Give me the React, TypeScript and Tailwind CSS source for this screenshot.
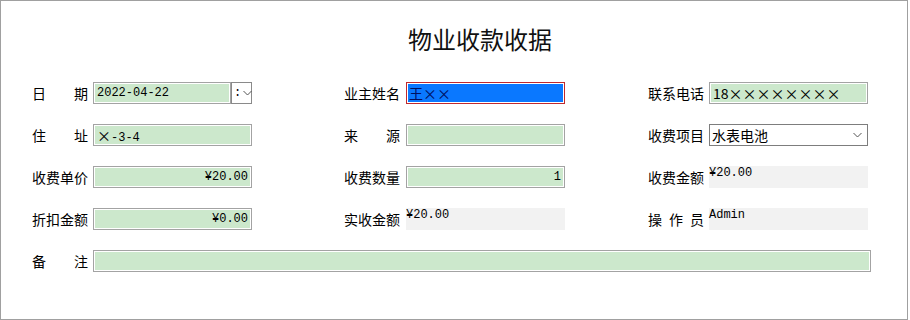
import React from "react";

const cjk = "font-['Noto_Sans_CJK_SC',sans-serif]";
const mono = "font-['Liberation_Mono','Noto_Sans_CJK_SC',monospace]";

function Label({ text }: { text: string }) {
  const chars = text.split("");
  return (
    <div className={`flex w-[56px] shrink-0 justify-between text-[14px] leading-[22px] text-black ${cjk}`}>
      {chars.map((c, i) => (
        <span key={i}>{c}</span>
      ))}
    </div>
  );
}

function GreenBox({
  value = "",
  right = false,
  w = "w-[159px]",
}: {
  value?: React.ReactNode;
  right?: boolean;
  w?: string;
}) {
  return (
    <div
      className={`h-[22px] ${w} border border-[#a3a3a3] bg-[#cce8cc] shadow-[inset_0_0_0_1px_#ffffff] px-[3px] text-[12px] leading-[20px] text-black ${mono} ${right ? "text-right" : ""}`}
    >
      {value}
    </div>
  );
}

function ReadBox({ value }: { value: string }) {
  return (
    <div className={`h-[22px] w-[159px] bg-[#f2f2f2] text-[12px] leading-[14px] text-black ${mono}`}>{value}</div>
  );
}

function Chevron() {
  return (
    <svg width="9" height="6" viewBox="0 0 9 6" className="shrink-0">
      <path d="M0.5 1 L4.5 5 L8.5 1" fill="none" stroke="#555" strokeWidth="1" />
    </svg>
  );
}

function Field({ label, children, gap = "gap-[5px]" }: { label: string; children: React.ReactNode; gap?: string }) {
  return (
    <div className={`flex items-center ${gap}`}>
      <Label text={label} />
      {children}
    </div>
  );
}

export default function App() {
  return (
    <div className="h-[320px] w-[908px] border border-[#a0a0a0] bg-white">
      <h1 className={`mt-[26px] pl-[52px] text-center text-[24px] leading-[24px] text-[#111] ${cjk}`}>物业收款收据</h1>

      <div className="ml-[31px] mt-[31px] grid grid-cols-[312px_304px_230px] gap-y-[20px]">
        {/* 第一行 */}
        <Field label="日期">
          <div className="flex">
            <GreenBox value="2022-04-22" w="w-[138px]" />
            <div className="flex h-[22px] w-[21px] items-center gap-[2px] border border-[#8a8a8a] bg-white pl-[2px] text-[12px] leading-none">
              <span className={mono}>:</span>
              <Chevron />
            </div>
          </div>
        </Field>
        <Field label="业主姓名" gap="gap-[6px]">
          <div
            className={`h-[22px] w-[159px] border border-[#c0282d] bg-[#0a78ff] shadow-[inset_0_0_0_1px_#ffffff] px-[2px] text-[14px] leading-[20px] text-[#001060] ${cjk}`}
          >
            王××
          </div>
        </Field>
        <Field label="联系电话">
          <div
            className={`h-[22px] w-[159px] border border-[#a3a3a3] bg-[#cce8cc] shadow-[inset_0_0_0_1px_#ffffff] px-[3px] text-[14px] leading-[20px] text-black ${cjk}`}
          >
            18××××××××
          </div>
        </Field>

        {/* 第二行 */}
        <Field label="住址">
          <GreenBox
            value={
              <>
                <span className={`text-[14px] ${cjk}`}>×</span>-3-4
              </>
            }
          />
        </Field>
        <Field label="来源" gap="gap-[6px]">
          <GreenBox />
        </Field>
        <Field label="收费项目">
          <div
            className={`flex h-[22px] w-[159px] items-center justify-between border border-[#7d7d7d] bg-white pl-[2px] pr-[5px] text-[14px] text-black ${cjk}`}
          >
            <span>水表电池</span>
            <Chevron />
          </div>
        </Field>

        {/* 第三行 */}
        <Field label="收费单价">
          <GreenBox value="¥20.00" right />
        </Field>
        <Field label="收费数量" gap="gap-[6px]">
          <GreenBox value="1" right />
        </Field>
        <Field label="收费金额">
          <ReadBox value="¥20.00" />
        </Field>

        {/* 第四行 */}
        <Field label="折扣金额">
          <GreenBox value="¥0.00" right />
        </Field>
        <Field label="实收金额" gap="gap-[6px]">
          <ReadBox value="¥20.00" />
        </Field>
        <Field label="操作员">
          <ReadBox value="Admin" />
        </Field>

        {/* 备注 */}
        <div className="col-span-3">
          <Field label="备注">
            <GreenBox w="w-[778px]" />
          </Field>
        </div>
      </div>
    </div>
  );
}
